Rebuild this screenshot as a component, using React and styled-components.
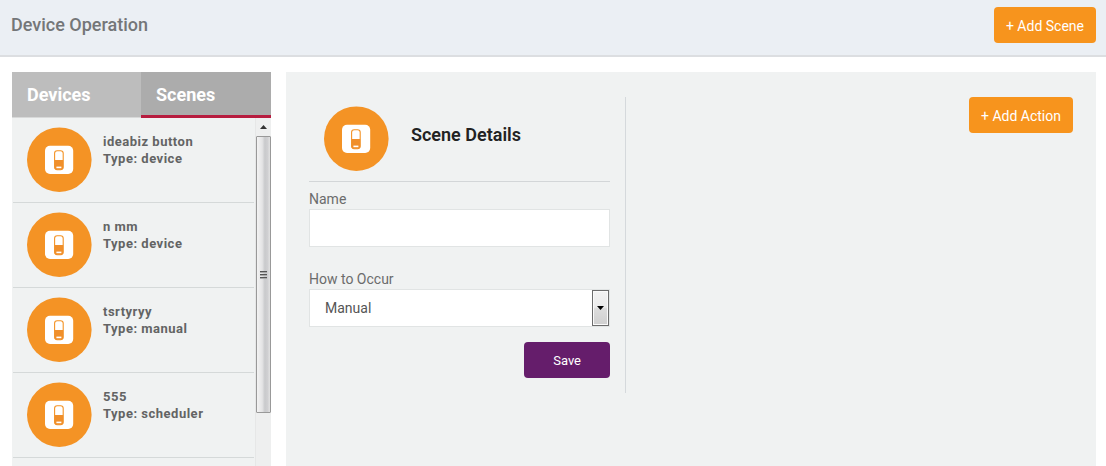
import React, { useState } from "react";
import styled, { createGlobalStyle } from "styled-components";

const GlobalStyle = createGlobalStyle`
  *, *::before, *::after { box-sizing: border-box; }
  body {
    margin: 0;
    background: #fff;
    color: #666;
    font: 14px/20px Roboto, "Liberation Sans", sans-serif;
  }
  button, input, select { font-family: inherit; }
`;

const Page = styled.div`
  display: flex;
  flex-direction: column;
  height: 100vh;
  overflow: hidden;
`;

const TopBar = styled.header`
  display: flex;
  align-items: flex-start;
  justify-content: space-between;
  padding: 7px 10px 12px 11px;
  background: #ebeff4;
  border-bottom: 2px solid #dcdee1;
`;

const PageTitle = styled.h1`
  margin: 0;
  font-size: 18px;
  line-height: 36px;
  font-weight: 500;
  color: #747678;
`;

const Button = styled.button`
  height: 36px;
  padding: 0 ${(p) => (p.$tone === "save" ? 29 : 12)}px;
  border: 0;
  border-radius: 4px;
  background: ${(p) => (p.$tone === "save" ? "#651d6b" : "#f7941d")};
  color: #fff;
  font-size: ${(p) => (p.$tone === "save" ? 13 : 14)}px;
  line-height: 38px;
  white-space: nowrap;
  cursor: pointer;
`;

const Content = styled.div`
  display: flex;
  flex: 1;
  gap: 15px;
  min-height: 0;
  padding: 15px 10px 0 12px;
`;

const Sidebar = styled.aside`
  display: flex;
  flex-direction: column;
  flex: 0 0 259px;
  background: #f0f2f2;
`;

const Tabs = styled.div`
  display: grid;
  grid-template-columns: 129px 1fr;
  height: 46px;
`;

const Tab = styled.button`
  padding: 0 15px;
  border: 0;
  background: ${(p) => (p.$active ? "#acacac" : "#bdbdbd")};
  box-shadow: inset 0 ${(p) => (p.$active ? "-3px #b71c3f" : "-1px #d8d9d9")};
  color: #fff;
  font-size: 18px;
  line-height: 46px;
  font-weight: 700;
  text-align: left;
  cursor: pointer;
`;

const ListFrame = styled.div`
  display: flex;
  flex: 1;
  min-height: 0;
`;

const SceneList = styled.ul`
  flex: 1;
  margin: 0;
  padding: 0 1px;
  overflow: hidden;
  list-style: none;
`;

const SceneRow = styled.li`
  display: flex;
  gap: 11px;
  height: 85px;
  padding: 9px 14px;
  border-bottom: 1px solid #d5d9d9;
`;

const SceneText = styled.div`
  padding-top: 6px;
  font-size: 13px;
  line-height: 17px;
  font-weight: 700;
  letter-spacing: 0.5px;
  color: #636464;
`;

const ScrollBar = styled.div`
  display: flex;
  flex-direction: column;
  flex: 0 0 16px;
  background: #eeefef;
  border-left: 1px solid #e6e7e7;
`;

const ScrollArrow = styled.svg`
  flex: none;
  width: 15px;
  height: 18px;
`;

const ScrollTrack = styled.div`
  flex: 1;
  min-height: 0;
`;

const ScrollThumb = styled.div`
  display: flex;
  flex-direction: column;
  align-items: center;
  justify-content: center;
  gap: 1px;
  width: 15px;
  height: 84%;
  border: 1px solid #999;
  border-radius: 1px;
  background: linear-gradient(90deg, #f3f3f3 0%, #e4e4e5 40%, #c9cacc 60%, #cfcfd1 80%, #e2e2e2 100%);
`;

const Grip = styled.span`
  width: 7px;
  height: 2px;
  border-top: 1px solid #555;
  border-bottom: 1px solid #aaa;
`;

const Panel = styled.main`
  display: grid;
  grid-template-columns: minmax(0, 317fr) minmax(0, 447fr);
  align-items: start;
  flex: 1;
  min-width: 0;
  padding: 25px 23px;
  background: #f0f2f2;
`;

const SceneForm = styled.form`
  display: flex;
  flex-direction: column;
  padding: 0 15px 15px 0;
  border-right: 1px solid #d5d9dc;
`;

const FormHeader = styled.div`
  display: flex;
  gap: 22px;
  height: 85px;
  margin-bottom: 7px;
  padding: 9px 15px;
  border-bottom: 1px solid #d3d6d8;
`;

const FormTitle = styled.h2`
  margin: 0;
  font-size: 18px;
  line-height: 58px;
  font-weight: 600;
  color: #222;
`;

const Field = styled.div`
  display: flex;
  flex-direction: column;
  margin-bottom: ${(p) => (p.$last ? 15 : 22)}px;
`;

const Label = styled.label`
  font-size: 14px;
  line-height: 20px;
  color: #6b6c6c;
`;

const TextInput = styled.input`
  width: 100%;
  height: 38px;
  padding: 0 15px;
  border: 1px solid #e1e4e4;
  background: #fff;
  color: #555;
  font-size: 14px;
`;

const SelectWrap = styled.div`
  position: relative;
`;

const Select = styled.select`
  display: block;
  width: 100%;
  height: 38px;
  padding: 0 32px 0 15px;
  border: 1px solid #e1e4e4;
  border-radius: 0;
  background: #fff;
  color: #555;
  font-size: 14px;
  appearance: none;
`;

const SelectArrow = styled.span`
  position: absolute;
  top: 1px;
  right: 1px;
  bottom: 1px;
  display: flex;
  align-items: center;
  justify-content: center;
  width: 17px;
  border: 1px solid #6c6c6c;
  background: linear-gradient(#f2f2f2, #ebebeb 48%, #dcdcdc 52%, #cfcfcf);
  box-shadow: inset 0 0 0 1px #fafafa;
  pointer-events: none;
`;

const Actions = styled.div`
  display: flex;
  justify-content: flex-end;
`;

const IconSvg = styled.svg`
  flex: none;
  width: 65px;
  height: 65px;
`;

function SwitchIcon() {
  return (
    <IconSvg viewBox="0 0 65 65" aria-hidden="true">
      <circle cx="32.3" cy="32.7" r="32.3" fill="#f49325" />
      <rect x="18" y="18.7" width="28.2" height="28.2" rx="5" fill="#fff" />
      <rect x="27.6" y="23.7" width="8.6" height="19" rx="2.6" fill="#fff" stroke="#f49325" strokeWidth="1.1" />
      <path d="M27.6 33h8.6v7.2a2.5 2.5 0 0 1-2.5 2.5h-3.6a2.5 2.5 0 0 1-2.5-2.5z" fill="#f08f2b" />
      <rect x="29.4" y="39.6" width="5" height="1.6" fill="#fff" />
    </IconSvg>
  );
}

const scenes = [
  { name: "ideabiz button", type: "device" },
  { name: "n mm", type: "device" },
  { name: "tsrtyryy", type: "manual" },
  { name: "555", type: "scheduler" },
];

export default function App() {
  const [tab, setTab] = useState("Scenes");
  return (
    <>
      <GlobalStyle />
      <Page>
        <TopBar>
          <PageTitle>Device Operation</PageTitle>
          <Button type="button">+ Add Scene</Button>
        </TopBar>
        <Content>
          <Sidebar>
            <Tabs role="tablist">
              {["Devices", "Scenes"].map((t) => (
                <Tab key={t} type="button" role="tab" aria-selected={tab === t} $active={tab === t} onClick={() => setTab(t)}>
                  {t}
                </Tab>
              ))}
            </Tabs>
            <ListFrame>
              <SceneList>
                {scenes.map((s) => (
                  <SceneRow key={s.name}>
                    <SwitchIcon />
                    <SceneText>
                      <div>{s.name}</div>
                      <div>Type: {s.type}</div>
                    </SceneText>
                  </SceneRow>
                ))}
              </SceneList>
              <ScrollBar aria-hidden="true">
                <ScrollArrow viewBox="0 0 15 18">
                  <path d="M4 11L7.5 7L11 11z" fill="#333" />
                </ScrollArrow>
                <ScrollTrack>
                  <ScrollThumb>
                    <Grip />
                    <Grip />
                    <Grip />
                  </ScrollThumb>
                </ScrollTrack>
              </ScrollBar>
            </ListFrame>
          </Sidebar>
          <Panel>
            <SceneForm onSubmit={(e) => e.preventDefault()}>
              <FormHeader>
                <SwitchIcon />
                <FormTitle>Scene Details</FormTitle>
              </FormHeader>
              <Field>
                <Label htmlFor="scene-name">Name</Label>
                <TextInput id="scene-name" type="text" />
              </Field>
              <Field $last>
                <Label htmlFor="scene-occur">How to Occur</Label>
                <SelectWrap>
                  <Select id="scene-occur" defaultValue="Manual">
                    <option>Manual</option>
                  </Select>
                  <SelectArrow aria-hidden="true">
                    <svg width="7" height="4" viewBox="0 0 7 4">
                      <path d="M0 0h7L3.5 4z" fill="#000" />
                    </svg>
                  </SelectArrow>
                </SelectWrap>
              </Field>
              <Actions>
                <Button $tone="save">Save</Button>
              </Actions>
            </SceneForm>
            <Actions>
              <Button type="button">+ Add Action</Button>
            </Actions>
          </Panel>
        </Content>
      </Page>
    </>
  );
}
